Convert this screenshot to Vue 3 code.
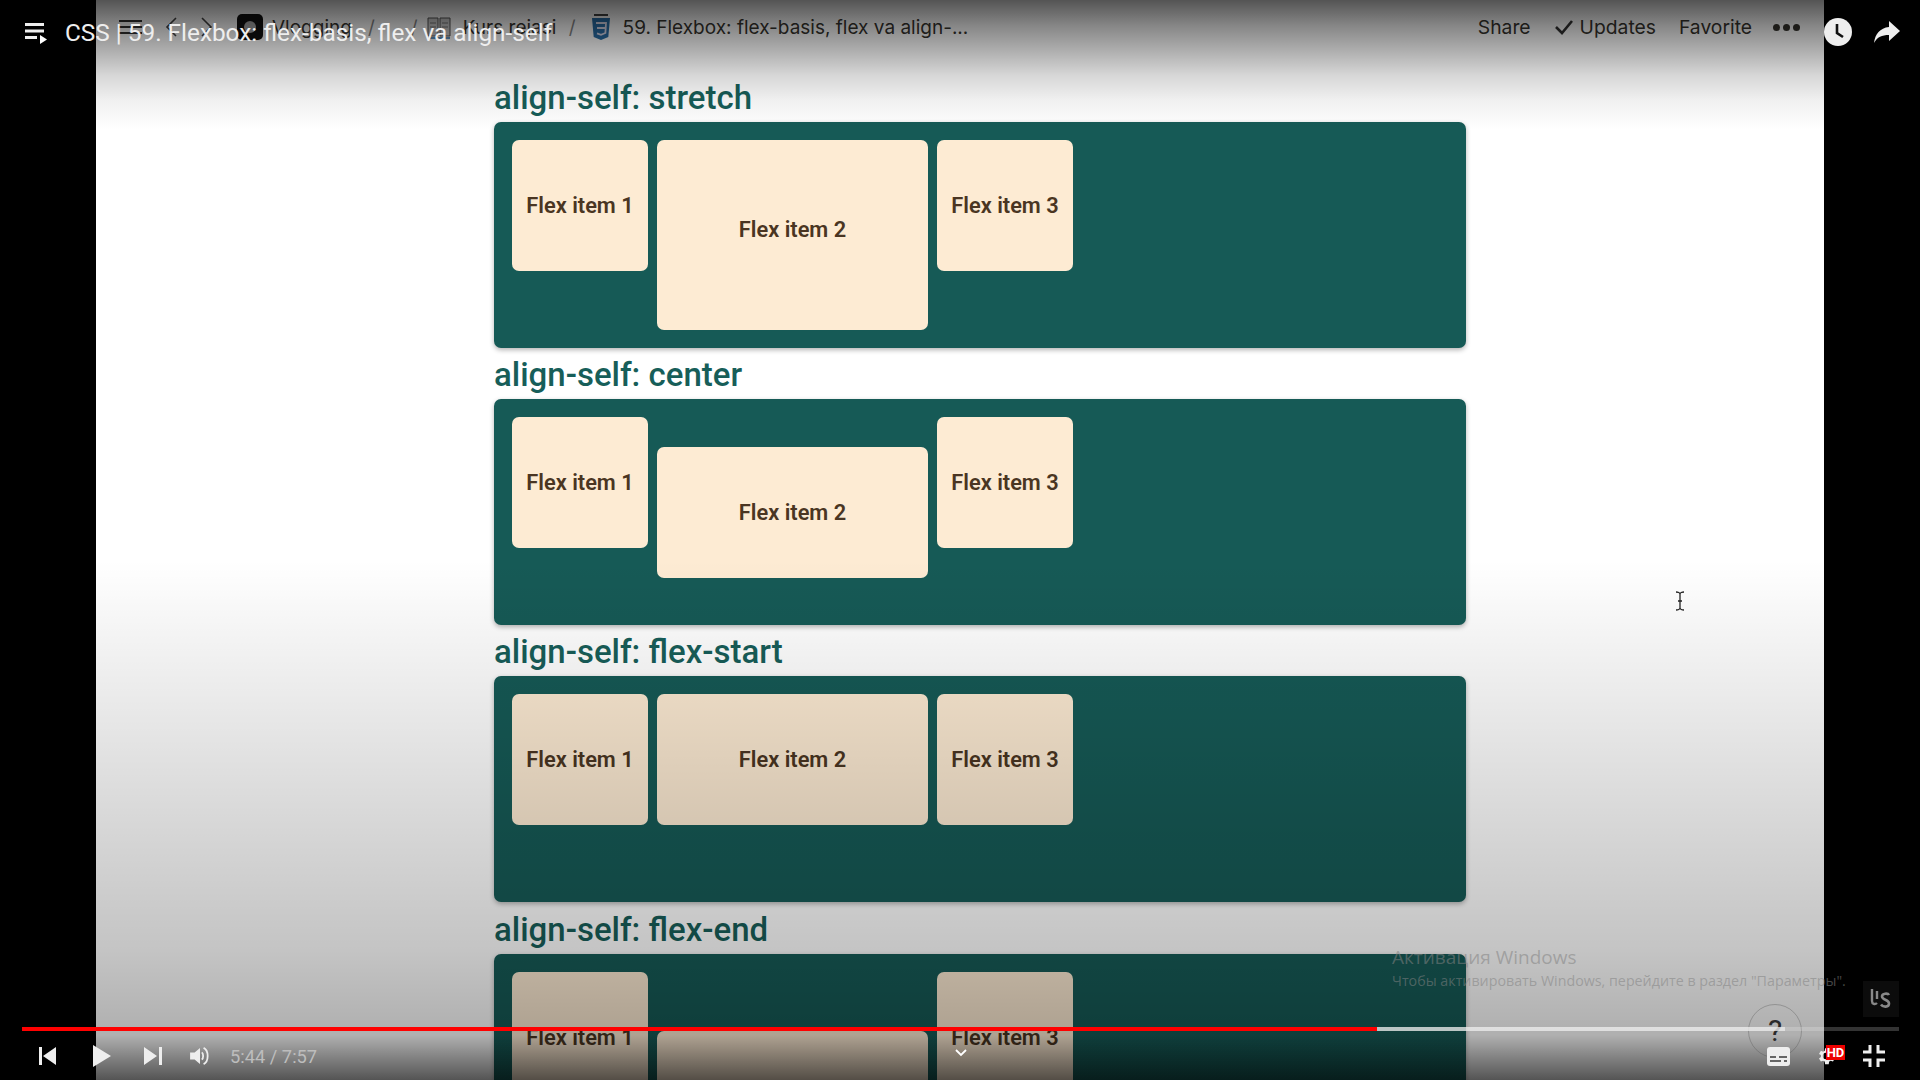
<template>
  <div class="player">
    <div class="page">
      <!-- notion top bar -->
      <div class="topbar">
        <div class="crumbs">
          <svg class="ic-menu" width="23" height="16" viewBox="0 0 23 16"><path d="M0 2h23M0 8h23M0 14h23" stroke="#333" stroke-width="2"/></svg>
          <svg class="ic-back" width="12" height="22" viewBox="0 0 12 22"><path d="M11 2 2 11l9 9" fill="none" stroke="#444" stroke-width="1.600"/></svg>
          <svg class="ic-forward" width="12" height="22" viewBox="0 0 12 22"><path d="M1 2l9 9-9 9" fill="none" stroke="#444" stroke-width="1.600"/></svg>
          <span class="logo-box"><i></i></span>
          <span class="crumb first">Vlogging</span>
          <span class="sep one">/</span>
          <span class="sep two">/</span>
          <svg class="ic-book" width="24" height="24" viewBox="0 0 24 24"><path d="M1 3h10v18H1zM13 3h10v18H13z" fill="#ccc" stroke="#555"/><path d="M3 8h6M3 12h6M15 8h6M15 12h6" stroke="#777"/><path d="M1 23h22" stroke="#2a6fa8" stroke-width="1.500"/></svg>
          <span class="crumb second">Kurs rejasi</span>
          <span class="sep three">/</span>
          <svg class="ic-css" width="20" height="28" viewBox="0 0 20 28"><path d="M1 5h18l-1.700 19L10 27l-7.300-3z" fill="#2a6fa8"/><path d="M5 10h10l-.6 10-4.400 1.800L6 20.300M6 15h8" fill="none" stroke="#dde" stroke-width="1.800"/><path d="M3 1h14v2H3z" fill="#444"/></svg>
          <span class="crumb current">59. Flexbox: flex-basis, flex va align-...</span>
        </div>
        <div class="actions">
          <span>Share</span>
          <span class="updates">
            <svg width="20" height="16" viewBox="0 0 20 16"><path d="M2 8l6 6L18 2" fill="none" stroke="#333" stroke-width="2.600"/></svg>
            Updates
          </span>
          <span>Favorite</span>
          <span class="dots"><i></i><i></i><i></i></span>
        </div>
      </div>

      <!-- flex examples -->
      <div class="content">
        <section v-for="s in sections" :key="s.name">
          <h2>align-self: {{ s.name }}</h2>
          <div class="panel">
            <div class="item">Flex item 1</div>
            <div class="item wide" :class="s.cls">Flex item 2</div>
            <div class="item">Flex item 3</div>
          </div>
        </section>
      </div>
    </div>

    <!-- video shade -->
    <div class="shade"></div>
    <div class="watermark">
      <div class="wm-title">Активация Windows</div>
      <div class="wm-sub">Чтобы активировать Windows, перейдите в раздел "Параметры".</div>
    </div>

    <svg class="cursor" width="12" height="20" viewBox="0 0 12 20"><path d="M2 1c2 0 4 1 4 2v14c0 1-2 2-4 2M10 1C8 1 6 2 6 3v14c0 1 2 2 4 2M4 10h4" fill="none" stroke="#222" stroke-width="1.300"/></svg>

    <!-- player overlay -->
    <div class="title-row">
      <svg width="24" height="24" viewBox="0 0 24 24"><path d="M1 2h19v3H1zM1 8.500h19v3H1zM1 15h12v3H1z" fill="#eee"/><path d="M16 14v9l7-4.500z" fill="#fff"/></svg>
      <span class="video-title">CSS | 59. Flexbox: flex-basis, flex va align-self</span>
    </div>
    <div class="top-right">
      <svg width="30" height="30" viewBox="0 0 30 30"><circle cx="15" cy="15" r="14" fill="#eee"/><path d="M14 7v9l6 4" fill="none" stroke="#111" stroke-width="2.600"/></svg>
      <svg width="28" height="24" viewBox="0 0 28 24"><path d="M16 1l11 10-11 10v-6C9 15 4 17 1 23 2 14 7 8 16 7z" fill="#eee"/></svg>
    </div>

    <svg class="chevron" width="14" height="8" viewBox="0 0 14 8"><path d="M2 1l5 5 5-5" fill="none" stroke="#fff" stroke-width="1.800"/></svg>

    <div class="ls-box">
      <svg width="24" height="24" viewBox="0 0 24 24"><path d="M3 2v12c0 3 3 4 5 2M8 4v8" fill="none" stroke="#888" stroke-width="2.400"/><path d="M20 8c-1-2-7-2-7 1.500s7 3 7 7-6 4-8 1" fill="none" stroke="#888" stroke-width="2.600"/></svg>
    </div>
    <div class="help">?</div>

    <div class="controls">
      <div class="progress">
        <div class="played"></div>
        <div class="buffered"></div>
      </div>
      <div class="buttons">
        <svg class="btn-prev" width="18" height="18" viewBox="0 0 18 18"><path d="M0 0h3v18H0zM17 0v18L4 9z" fill="#eee"/></svg>
        <svg class="btn-play" width="18" height="22" viewBox="0 0 18 22"><path d="M0 0l18 11L0 22z" fill="#eee"/></svg>
        <svg class="btn-next" width="18" height="18" viewBox="0 0 18 18"><path d="M0 0l13 9L0 18zM15 0h3v18h-3z" fill="#eee"/></svg>
        <svg class="btn-vol" width="20" height="18" viewBox="0 0 22 20"><path d="M0 6h5l6-5v18l-6-5H0z" fill="#eee"/><path d="M13 6c2 1.500 2 6.500 0 8" fill="none" stroke="#eee" stroke-width="2"/><path d="M15 1c6 3 6 15 0 18" fill="none" stroke="#eee" stroke-width="2"/></svg>
        <span class="time">5:44 / 7:57</span>
        <span class="spacer"></span>
        <svg class="btn-subs" width="23" height="19" viewBox="0 0 23 19"><rect width="23" height="19" rx="3" fill="#eee"/><path d="M3 10h6M12 10h8M3 14h11M17 14h3" stroke="#666" stroke-width="1.800"/></svg>
        <span class="gear-wrap">
          <svg width="22" height="24" viewBox="0 0 24 24"><path d="M12 15.500a3.500 3.500 0 1 1 0-7 3.500 3.500 0 0 1 0 7zm7.400-2.500a7.500 7.500 0 0 0 0-2l2.100-1.600-2-3.500-2.500 1a7.500 7.500 0 0 0-1.700-1L15 3.500h-4l-.4 2.900a7.500 7.500 0 0 0-1.700 1l-2.500-1-2 3.500L6.500 11a7.500 7.500 0 0 0 0 2l-2.100 1.600 2 3.500 2.500-1a7.500 7.500 0 0 0 1.700 1l.4 2.900h4l.4-2.900a7.500 7.500 0 0 0 1.700-1l2.500 1 2-3.500z" fill="#eee"/></svg>
          <b class="hd">HD</b>
        </span>
        <svg class="btn-exit" width="22" height="22" viewBox="0 0 22 22"><path d="M7 0v7H0M15 0v7h7M7 22v-7H0M15 22v-7h7" fill="none" stroke="#eee" stroke-width="3"/></svg>
      </div>
    </div>
  </div>
</template>

<script setup>
const sections = [
  { name: "stretch", cls: "stretch" },
  { name: "center", cls: "center" },
  { name: "flex-start", cls: "start" },
  { name: "flex-end", cls: "end" },
];
</script>

<style>
html, body {
  margin: 0;
  background: #000;
  overflow: hidden;
}
</style>

<style scoped>
.player {
  position: relative;
  width: 1920px;
  height: 1080px;
  background: #000;
  overflow: hidden;
  font-family: Roboto, "Noto Sans", sans-serif;
}

.page {
  width: 1728px;
  height: 1080px;
  margin-left: 96px;
  background: #fff;
  overflow: hidden;
}

.topbar {
  display: flex;
  align-items: center;
  justify-content: space-between;
  height: 54px;
  padding: 0 24px 0 23px;
  font-family: Inter, "Noto Sans", sans-serif;
  font-size: 19.300px;
  color: #37352f;
}

.crumbs,
.actions {
  display: flex;
  align-items: center;
}

.crumbs { font-size: 19px; }

.ic-menu { margin-right: 23px; }
.ic-back { margin-right: 24px; }
.ic-forward { margin-right: 24px; }

.logo-box {
  display: flex;
  align-items: center;
  justify-content: center;
  width: 26px;
  height: 26px;
  margin-right: 9px;
  border-radius: 5px;
  background: #111;
}

.logo-box i {
  width: 12px;
  height: 12px;
  border-radius: 50%;
  background: #aaa;
}

.crumb { white-space: nowrap; }
.crumb.first { width: 90px; }
.crumb.second { width: 100px; }

.sep { color: #888; }
.sep.one { margin-left: 6px; }
.sep.two { margin-left: 36px; margin-right: 9px; }
.sep.three { margin-left: 6px; margin-right: 15px; }

.ic-book { margin-right: 12px; }
.ic-css { margin-right: 12px; }

.actions { gap: 23px; }

.updates {
  display: flex;
  align-items: center;
  gap: 6px;
}

.dots {
  display: flex;
  gap: 3px;
  margin-left: -2px;
}

.dots i {
  width: 7px;
  height: 7px;
  border-radius: 50%;
  background: #37352f;
}

.content {
  width: 972px;
  margin-left: 398px;
}

section {
  height: 277.300px;
}

h2 {
  margin: 0;
  height: 51px;
  box-sizing: border-box;
  font-size: 33px;
  line-height: 53px;
  font-weight: 500;
  color: #175e59;
  white-space: nowrap;
}

section:first-child {
  height: 294px;
}

section:first-child h2 {
  height: 68px;
  padding-top: 17px;
}

.panel {
  display: flex;
  align-items: flex-start;
  gap: 9px;
  height: 226px;
  padding: 18px;
  box-sizing: border-box;
  border-radius: 7px;
  background: #165a56;
  box-shadow: 0 2px 5px rgba(0, 0, 0, 0.3);
}

.item {
  display: flex;
  align-items: center;
  justify-content: center;
  width: 136px;
  height: 131px;
  flex: none;
  border-radius: 7px;
  background: #fdebd3;
  font-size: 21.800px;
  font-weight: 600;
  color: #4a3522;
}

.wide { width: 271px; }
.stretch {
  align-self: stretch;
  height: auto;
  padding-bottom: 12px;
  box-sizing: border-box;
}
.center { align-self: center; }
.start { align-self: flex-start; }
.end { align-self: flex-end; }

.shade {
  position: absolute;
  inset: 0;
  background:
    linear-gradient(to bottom, rgba(0,0,0,0) 1035px, rgba(0,0,0,0.52) 1080px),
    linear-gradient(to bottom, rgba(0,0,0,0.67) 0, rgba(0,0,0,0.48) 25px, rgba(0,0,0,0.32) 50px, rgba(0,0,0,0.16) 75px, rgba(0,0,0,0.06) 100px, rgba(0,0,0,0) 130px, rgba(0,0,0,0) 560px, rgba(0,0,0,0.23) 950px, rgba(0,0,0,0.31) 1030px);
}

.watermark {
  position: absolute;
  left: 1392px;
  top: 944px;
  color: rgba(130, 130, 130, 0.55);
  font-family: "Open Sans", "Noto Sans", sans-serif;
  white-space: nowrap;
}

.wm-title {
  font-size: 19px;
  line-height: 27px;
}

.wm-sub {
  font-size: 14.270px;
  line-height: 20px;
}

.cursor {
  position: absolute;
  left: 1674px;
  top: 591px;
}

.title-row {
  position: absolute;
  left: 24px;
  top: 21px;
  display: flex;
  align-items: center;
  gap: 17px;
  color: #eee;
}

.video-title {
  font-size: 24.350px;
  line-height: 24px;
  white-space: nowrap;
}

.top-right {
  position: absolute;
  left: 1823px;
  top: 17px;
  display: flex;
  align-items: center;
  gap: 20px;
}

.chevron {
  position: absolute;
  left: 954px;
  top: 1049px;
}

.ls-box {
  position: absolute;
  left: 1863px;
  top: 981px;
  display: flex;
  align-items: center;
  justify-content: center;
  width: 36px;
  height: 36px;
  background: #0c0c0c;
}

.help {
  position: absolute;
  left: 1748px;
  top: 1004px;
  width: 54px;
  height: 54px;
  box-sizing: border-box;
  border: 1px solid rgba(80, 80, 80, 0.35);
  border-radius: 50%;
  text-align: center;
  font-size: 30px;
  line-height: 52px;
  color: #2a2a2a;
}

.controls {
  position: absolute;
  left: 22px;
  right: 21px;
  top: 1027px;
}

.progress {
  position: relative;
  height: 4px;
  background: rgba(255, 255, 255, 0.2);
}

.played {
  position: absolute;
  left: 0;
  top: 0;
  bottom: 0;
  width: 1355px;
  background: #f00;
}

.buffered {
  position: absolute;
  left: 1355px;
  top: 0;
  bottom: 0;
  width: 408px;
  background: rgba(235, 235, 235, 0.72);
}

.buttons {
  display: flex;
  align-items: center;
  height: 22px;
  margin-top: 14px;
  padding-left: 17px;
}

.btn-play { margin-left: 36px; }
.btn-next { margin-left: 33px; }
.btn-vol { margin-left: 28px; }

.time {
  margin-left: 20px;
  font-size: 18.300px;
  color: #bdbdbd;
}

.spacer { flex: 1; }

.gear-wrap {
  position: relative;
  display: flex;
  margin-left: 25px;
  margin-right: 26px;
}

.hd {
  position: absolute;
  left: 11px;
  top: 1px;
  width: 19px;
  height: 15px;
  background: #e00;
  color: #fff;
  font-size: 13px;
  line-height: 15px;
  text-align: center;
}

.btn-exit { margin-right: 14px; }
</style>
